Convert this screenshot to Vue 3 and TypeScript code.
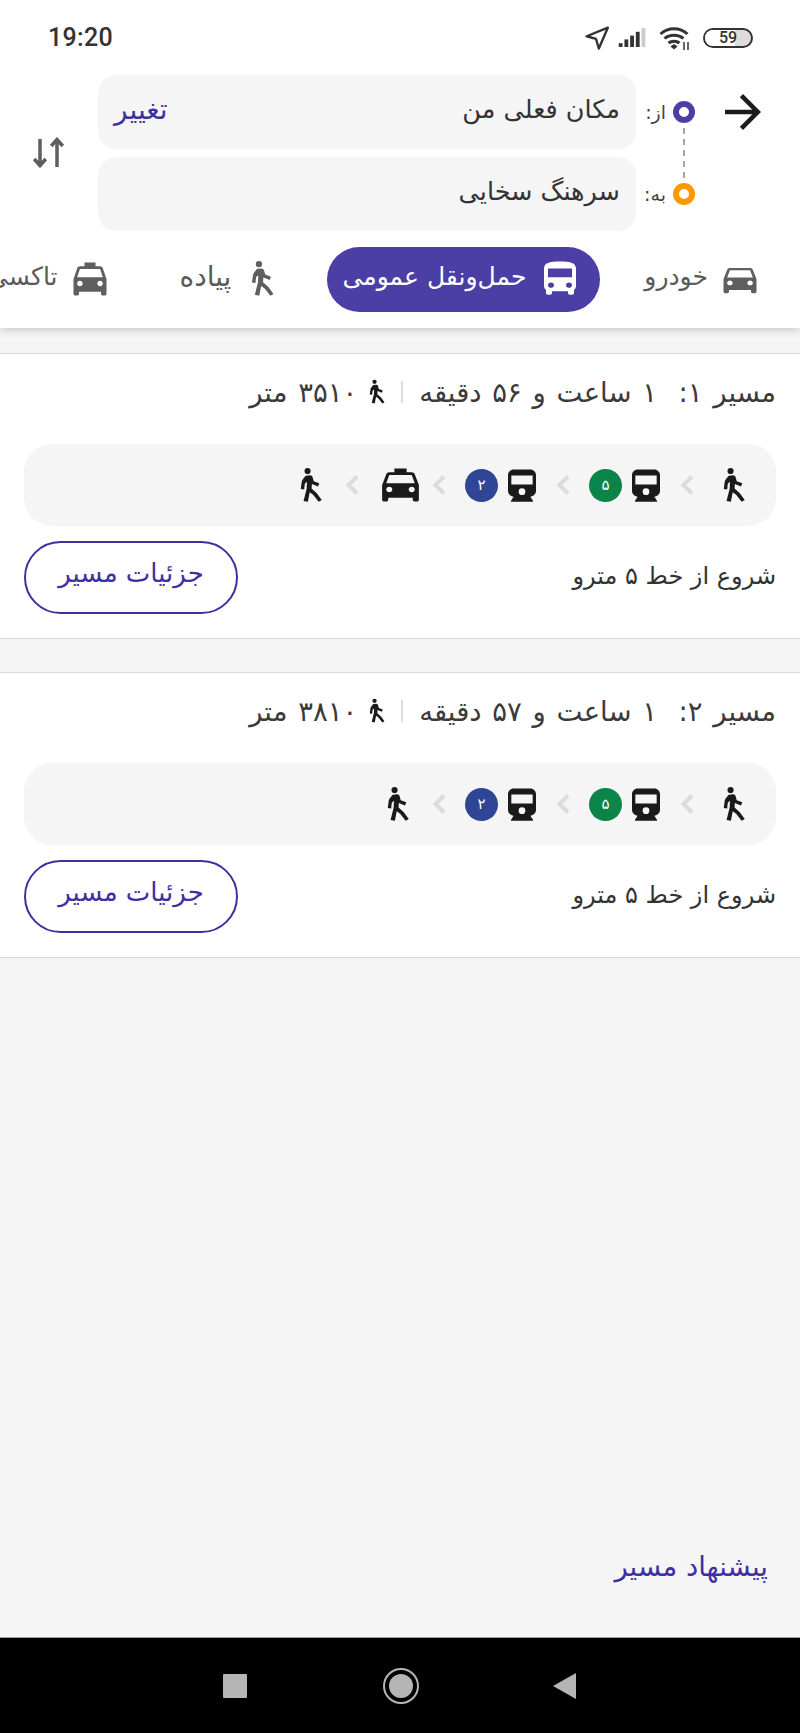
<template>
  <div class="screen">
    <header class="top">
      <div class="status" dir="ltr">
        <span class="clock">19:20</span>
        <div class="status-icons">
          <svg class="st-nav" viewBox="0 0 24 24"><path d="M22 2.500 2.500 10.400l8.600 2.500 2.600 8.800z" fill="none" stroke="#333" stroke-width="2.200" stroke-linejoin="round" /></svg>
          <svg class="st-signal" viewBox="0 0 30 20">
            <rect x="0" y="16" width="4" height="4" fill="#333" />
            <rect x="6" y="12" width="4" height="8" fill="#333" />
            <rect x="12" y="8" width="4" height="12" fill="#333" />
            <rect x="18" y="4" width="4" height="16" fill="#333" />
            <rect x="24" y="0" width="4" height="20" fill="#ccc" />
          </svg>
          <svg class="st-wifi" viewBox="0 0 34 26">
            <path d="M1.500 9C9 2 21 2 28.500 9M5.500 13.500C10.500 9 19.500 9 24.500 13.500M9.500 18C12.500 15.500 17.500 15.500 20.500 18" fill="none" stroke="#333" stroke-width="3" />
            <path d="M11.500 21.500 15 19l3.500 2.500L15 24.500z" fill="#333" />
            <path d="M25 17v8M29 17v8" stroke="#333" stroke-width="1.500" />
          </svg>
          <div class="battery"><span class="battery-fill"></span><span class="battery-text">59</span></div>
        </div>
      </div>

      <div class="trip">
        <button class="back">
          <svg viewBox="0 0 24 24"><path :d="icons.arrow" /></svg>
        </button>
        <div class="stops">
          <div class="stop">
            <span class="dot dot-from"></span>
            <span class="stop-label">از:</span>
            <div class="field">
              <span>مکان فعلی من</span>
              <a class="change">تغییر</a>
            </div>
          </div>
          <div class="stop">
            <span class="dot dot-to"></span>
            <span class="stop-label">به:</span>
            <div class="field"><span>سرهنگ سخایی</span></div>
          </div>
          <span class="dash"></span>
        </div>
        <button class="swap">
          <svg viewBox="0 0 36 32"><path d="M8 2v26M2.200 22 8 28.500 13.800 22M25 30V4M19.200 9 25 2.500 30.800 9" /></svg>
        </button>
      </div>

      <nav class="tabs">
        <div v-for="tab in tabs" :key="tab.label" class="tab" :class="['tab-' + tab.icon, { active: tab.active }]">
          <svg class="tab-icon" viewBox="0 0 24 24" preserveAspectRatio="none"><path :d="icons[tab.icon]" /></svg>
          <span>{{ tab.label }}</span>
        </div>
      </nav>
    </header>

    <main class="results">
      <section v-for="route in routes" :key="route.title" class="route">
        <div class="route-title">
          <span>{{ route.title }}</span>
          <span class="sep"></span>
          <svg class="mini-walk" viewBox="0 0 24 24"><path :d="icons.walk" /></svg>
          <span>{{ route.distance }}</span>
        </div>

        <div class="strip">
          <template v-for="(step, i) in route.steps" :key="i">
            <svg v-if="i > 0" class="chevron" viewBox="0 0 14 22"><path d="M12 2.500 3.500 11l8.500 8.500" /></svg>
            <div class="step">
              <svg class="step-icon" :class="step.icon" viewBox="0 0 24 24" preserveAspectRatio="none"><path :d="icons[step.icon]" /></svg>
              <span v-if="step.line" class="badge" :style="{ background: step.color }">{{ step.line }}</span>
            </div>
          </template>
        </div>

        <div class="route-foot">
          <span class="hint">شروع از خط ۵ مترو</span>
          <button class="details">جزئیات مسیر</button>
        </div>
      </section>

      <a class="suggest">پیشنهاد مسیر</a>
    </main>

    <footer class="navbar">
      <span class="nav-square"></span>
      <span class="nav-circle"><span></span></span>
      <span class="nav-back"></span>
    </footer>
  </div>
</template>

<script setup lang="ts">
type IconName = 'arrow' | 'walk' | 'bus' | 'car' | 'taxi' | 'train'

const icons: Record<IconName, string> = {
  arrow: 'M12 4l-1.410 1.410L16.170 11H4v2h12.170l-5.580 5.590L12 20l8-8z',
  walk: 'M8.800.6a2 2 0 1 0 0 4 2 2 0 1 0 0-4zM7.600 5.600l3-.2q1 0 1.400 1l.8 2.800 3.600 1.400-.8 2-4-1.600-.2 3 3.400 3L18 21.400l-2 1.200-3.600-4.600-2.200-1.600-1.200 6.200-2.800-.6 2-7.900.2-4.500-1.400 1.200-.4 3.800-2.200-.4.6-4.600q.2-1 1-2z',
  bus: 'M4 16c0 .88.39 1.670 1 2.220V20c0 .55.45 1 1 1h1c.55 0 1-.45 1-1v-1h8v1c0 .55.45 1 1 1h1c.55 0 1-.45 1-1v-1.780c.61-.55 1-1.340 1-2.220V6c0-3.500-3.580-4-8-4s-8 .5-8 4v10zm3.500 1c-.83 0-1.500-.67-1.500-1.500S6.670 14 7.500 14s1.500.67 1.500 1.500S8.330 17 7.500 17zm9 0c-.83 0-1.500-.67-1.500-1.500s.67-1.500 1.500-1.500 1.500.67 1.500 1.500-.67 1.500-1.500 1.500zm1.500-6H6V6h12v5z',
  car: 'M18.920 6.010C18.720 5.420 18.160 5 17.500 5h-11c-.66 0-1.210.42-1.420 1.010L3 12v8c0 .55.45 1 1 1h1c.55 0 1-.45 1-1v-1h12v1c0 .55.45 1 1 1h1c.55 0 1-.45 1-1v-8l-2.080-5.990zM6.500 16c-.83 0-1.500-.67-1.500-1.500S5.670 13 6.500 13s1.500.67 1.500 1.500S7.330 16 6.500 16zm11 0c-.83 0-1.500-.67-1.500-1.500s.67-1.500 1.500-1.500 1.500.67 1.500 1.500-.67 1.500-1.500 1.500zM5 11l1.500-4.500h11L19 11H5z',
  taxi: 'M18.920 6.010C18.720 5.420 18.160 5 17.500 5H15V3H9v2H6.500c-.66 0-1.210.42-1.420 1.010L3 12v8c0 .55.45 1 1 1h1c.55 0 1-.45 1-1v-1h12v1c0 .55.45 1 1 1h1c.55 0 1-.45 1-1v-8l-2.080-5.990zM6.500 16c-.83 0-1.500-.67-1.500-1.500S5.670 13 6.500 13s1.500.67 1.500 1.500S7.330 16 6.500 16zm11 0c-.83 0-1.500-.67-1.500-1.500s.67-1.500 1.500-1.500 1.500.67 1.500 1.500-.67 1.500-1.500 1.500zM5 11l1.500-4.500h11L19 11H5z',
  train: 'M7 2.700h10c1.900 0 3.400 1.500 3.400 3.400v9.400c0 1.900-1.500 3.400-3.400 3.500l1.600 2.500v.5H5.400v-.5L7 19c-1.900-.1-3.400-1.600-3.400-3.500V6.100C3.600 4.200 5.100 2.700 7 2.700zM5.600 6.300v5.400h12.800V6.300zM12 14a2 2 0 1 0 0 4 2 2 0 1 0 0-4z',
}

interface Step {
  icon: IconName
  line?: string
  color?: string
}

const tabs: { label: string; icon: IconName; active?: boolean }[] = [
  { label: 'خودرو', icon: 'car' },
  { label: 'حمل‌ونقل عمومی', icon: 'bus', active: true },
  { label: 'پیاده', icon: 'walk' },
  { label: 'تاکسی', icon: 'taxi' },
]

const walk: Step = { icon: 'walk' }
const green: Step = { icon: 'train', line: '۵', color: '#0a8449' }
const blue: Step = { icon: 'train', line: '۲', color: '#2f4596' }

const routes: { title: string; distance: string; steps: Step[] }[] = [
  {
    title: 'مسیر ۱:  ۱ ساعت و ۵۶ دقیقه',
    distance: '۳۵۱۰ متر',
    steps: [walk, green, blue, { icon: 'taxi' }, walk],
  },
  {
    title: 'مسیر ۲:  ۱ ساعت و ۵۷ دقیقه',
    distance: '۳۸۱۰ متر',
    steps: [walk, green, blue, walk],
  },
]
</script>

<style scoped>
.screen {
  width: 800px;
  height: 1733px;
  display: flex;
  flex-direction: column;
  direction: rtl;
  overflow: hidden;
  background: #f5f5f5;
  color: #333;
  font-family: "DejaVu Sans", sans-serif;
}

.top {
  height: 328px;
  flex-shrink: 0;
  background: #fff;
  box-shadow: 0 2px 8px rgba(0, 0, 0, 0.18);
  position: relative;
  z-index: 1;
}

.status {
  direction: ltr;
  height: 75px;
  padding: 0 47px 0 48px;
  display: flex;
  align-items: center;
  justify-content: space-between;
}
.clock {
  font: 500 25px Roboto, sans-serif;
  color: #333;
  letter-spacing: 0.3px;
}
.status-icons {
  display: flex;
  align-items: center;
}
.st-nav { width: 26px; height: 26px; margin-right: 8px; }
.st-signal { width: 30px; height: 19px; margin-right: 11px; }
.st-wifi { width: 34px; height: 26px; margin-right: 10px; }
.battery {
  width: 50px;
  height: 20px;
  border: 2px solid #333;
  border-radius: 10px;
  box-sizing: border-box;
  position: relative;
  overflow: hidden;
  background: #ddd;
}
.battery-fill {
  position: absolute;
  left: 0;
  top: 0;
  bottom: 0;
  width: 30px;
  background: #fff;
}
.battery-text {
  position: absolute;
  inset: 0;
  text-align: center;
  font: 500 16px/16px Roboto, sans-serif;
  color: #333;
}

.trip {
  display: flex;
  align-items: flex-start;
  padding-right: 30px;
}
.back,
.swap {
  background: none;
  border: 0;
  padding: 0;
  display: block;
}
.back {
  margin-top: 10px;
}
.back svg {
  display: block;
  width: 54px;
  height: 54px;
  fill: #1c1c1c;
}
.swap {
  margin: 62px 30px 0 0;
}
.swap svg {
  display: block;
  width: 36px;
  height: 32px;
  fill: none;
  stroke: #5f5f5f;
  stroke-width: 3.500;
}

.stops {
  position: relative;
  display: flex;
  flex-direction: column;
  gap: 8px;
  width: 597px;
  margin-right: 21px;
}
.stop {
  display: flex;
  align-items: center;
}
.dot {
  width: 22px;
  height: 22px;
  box-sizing: border-box;
  border-radius: 50%;
  border: 6px solid;
  flex-shrink: 0;
}
.dot-from { border-color: #4b3fa5; }
.dot-to { border-color: #ff9800; }
.dash {
  position: absolute;
  right: 10px;
  top: 53px;
  height: 50px;
  border-right: 2px dashed #a5a5a5;
}
.stop-label {
  width: 37px;
  box-sizing: border-box;
  padding-right: 7px;
  font-size: 19px;
  color: #444;
  white-space: nowrap;
}
.field {
  flex: 1;
  height: 74px;
  box-sizing: border-box;
  padding: 0 16px 6px;
  background: #f5f5f5;
  border-radius: 18px;
  display: flex;
  align-items: center;
  justify-content: space-between;
  font-size: 25.500px;
}
.change {
  color: #40309f;
  font-size: 28px;
}

.tabs {
  display: flex;
  align-items: center;
  gap: 28px;
  margin-top: 15px;
  padding-right: 22px;
  height: 66px;
  white-space: nowrap;
  font-size: 25px;
  color: #5a5a5a;
}
.tab {
  display: flex;
  align-items: center;
  gap: 10px;
  padding: 0 16px;
  flex-shrink: 0;
  height: 65px;
}
.tab span {
  padding-bottom: 6px;
}
.tab-icon {
  width: 44px;
  height: 44px;
  fill: #5f5f5f;
  fill-rule: evenodd;
  flex-shrink: 0;
}
.tab-car .tab-icon {
  height: 38px;
}
.tab-bus .tab-icon {
  width: 48px;
  height: 42px;
}
.tab-walk {
  gap: 14px;
  padding-left: 24px;
  font-size: 28px;
}
.tab-walk .tab-icon {
  width: 38px;
  height: 38px;
}
.tab.active {
  background: #4b3fa5;
  color: #fff;
  border-radius: 33px;
  padding-left: 15px;
}
.tab.active .tab-icon {
  fill: #fff;
}

.results {
  flex: 1;
  position: relative;
  padding-top: 25px;
  display: flex;
  flex-direction: column;
  gap: 33px;
}
.route {
  height: 286px;
  box-sizing: border-box;
  background: #fff;
  border-top: 1px solid #d9d9d9;
  border-bottom: 1px solid #d9d9d9;
  padding: 0 24px;
}
.route-title {
  height: 75px;
  display: flex;
  align-items: center;
  gap: 8px;
  font-size: 27.500px;
  word-spacing: 2px;
  color: #3a3a3a;
  white-space: pre;
}
.sep {
  width: 2px;
  height: 22px;
  background: #ddd;
  margin: 0 8px 0 2px;
}
.mini-walk {
  width: 26px;
  height: 26px;
  fill: #1a1a1a;
  fill-rule: evenodd;
}

.strip {
  margin-top: 15px;
  height: 82px;
  background: #f5f5f5;
  border-radius: 28px;
  padding-right: 22px;
  display: flex;
  align-items: center;
}
.step {
  display: flex;
  align-items: center;
}
.step-icon {
  width: 40px;
  height: 40px;
  fill: #1a1a1a;
  fill-rule: evenodd;
}
.step-icon.walk {
  width: 37px;
  height: 37px;
  margin-left: 4px;
}
.step-icon.taxi {
  width: 49px;
  height: 44px;
  margin: 0 -7px 0 -2px;
}
.badge {
  width: 33px;
  height: 33px;
  margin-right: 4px;
  border-radius: 50%;
  color: #fff;
  font-size: 15px;
  line-height: 33px;
  text-align: center;
}
.chevron {
  width: 14px;
  height: 22px;
  margin: 0 19px 0 14px;
  fill: none;
  stroke: #dcdcdc;
  stroke-width: 4;
}

.route-foot {
  margin-top: 15px;
  display: flex;
  align-items: center;
  justify-content: space-between;
}
.hint {
  font-size: 24px;
  color: #333;
  padding-bottom: 4px;
}
.details {
  width: 214px;
  height: 73px;
  padding: 0 0 10px;
  background: #fff;
  border: 2px solid #40309f;
  border-radius: 37px;
  color: #40309f;
  font: 26px "DejaVu Sans", sans-serif;
}

.suggest {
  position: absolute;
  right: 32px;
  bottom: 55px;
  color: #40309f;
  font-size: 27.500px;
}

.navbar {
  height: 96px;
  flex-shrink: 0;
  box-sizing: border-box;
  background: #000;
  border-top: 1px solid #999;
  direction: ltr;
  display: flex;
  align-items: center;
  justify-content: center;
  padding-right: 2px;
}
.nav-square {
  width: 24px;
  height: 24px;
  background: #b5b5b5;
  border-radius: 1px;
}
.nav-circle {
  width: 36px;
  height: 36px;
  margin-left: 136px;
  margin-right: 134px;
  box-sizing: border-box;
  border: 2.500px solid #b5b5b5;
  border-radius: 50%;
  display: flex;
  align-items: center;
  justify-content: center;
}
.nav-circle span {
  width: 24px;
  height: 24px;
  border-radius: 50%;
  background: #b5b5b5;
}
.nav-back {
  width: 0;
  height: 0;
  border-top: 13px solid transparent;
  border-bottom: 13px solid transparent;
  border-right: 23px solid #b5b5b5;
}
</style>

<style>
html,
body {
  margin: 0;
  background: #f5f5f5;
}
</style>
